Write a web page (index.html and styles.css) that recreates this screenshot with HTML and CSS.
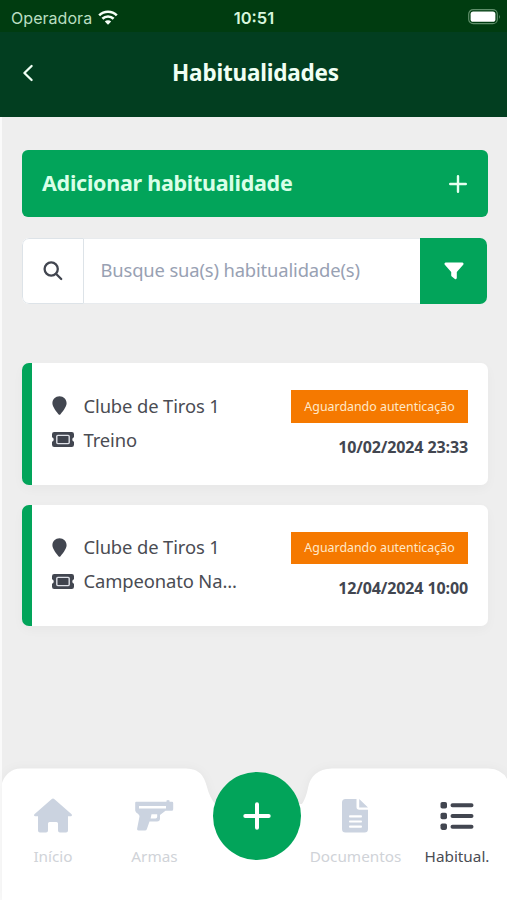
FILE: index.html
```html
<!DOCTYPE html>
<html lang="pt-BR">
<head>
    <meta charset="UTF-8">
    <meta name="viewport" content="width=device-width, initial-scale=1.0">
    <title>Habitualidades</title>

    <link rel="stylesheet" href="styles.css">
</head>
<body>

    <div class="status-bar">
        <div class="carrier">
            <span>Operadora</span>
            <svg width="20" height="15" viewBox="0 0 20 15" fill="none" stroke="#f4fff6" stroke-width="2.6">
                <path d="M1.2 5.4a12.6 12.6 0 0 1 17.6 0"/>
                <path d="M4.4 8.8a8 8 0 0 1 11.2 0"/>
                <path d="M10 14.8L6.8 11.6a4.6 4.6 0 0 1 6.4 0z" fill="#f4fff6" stroke="none"/>
            </svg>
        </div>
        <span class="clock">10:51</span>
        <svg class="battery" width="33" height="16" viewBox="0 0 33 16">
            <rect x=".7" y=".7" width="28.6" height="14" rx="4.5" fill="none" stroke="#5f8f6a" stroke-width="1.2"/>
            <rect x="2.6" y="2.6" width="24.8" height="10.2" rx="2.6" fill="#fff"/>
            <path d="M31 5.6q1.6 2.2 0 4.4z" fill="#5f8f6a"/>
        </svg>
    </div>

    <header class="header">
        <svg class="back" width="12" height="18" viewBox="0 0 12 18" fill="none" stroke="#f0fff4" stroke-width="2.3" stroke-linecap="round" stroke-linejoin="round">
            <path d="M9.6 2L2.4 9l7.2 7"/>
        </svg>
        <h1>Habitualidades</h1>
    </header>

    <main class="content">

        <div class="add-btn">
            <span>Adicionar habitualidade</span>
            <svg width="18" height="18" viewBox="0 0 18 18" stroke="#e6fff0" stroke-width="2.4" stroke-linecap="round">
                <path d="M9 1.2v15.600M1.200 9h15.600"/>
            </svg>
        </div>

        <div class="search">
            <div class="search-icon">
                <svg width="20" height="20" viewBox="0 0 20 20" fill="none" stroke="#424650" stroke-width="2.3" stroke-linecap="round">
                    <circle cx="8.2" cy="8" r="6.6"/>
                    <path d="M13.2 13l5 5"/>
                </svg>
            </div>
            <div class="search-text"><span>Busque sua(s) habitualidade(s)</span></div>
            <div class="filter">
                <svg width="20" height="18" viewBox="0 0 20 18" fill="#fff">
                    <path d="M1.6.6h16.8q1.8.5.8 2.1L12.800 10v6q-.3 1.700-1.900.900L7.800 14.500q-.6-.5-.6-1.300V10L.8 2.700Q-.2 1.100 1.600.600z"/>
                </svg>
            </div>
        </div>

        <div class="cards">
            <div class="card">
                <div class="info">
                    <div class="row">
                        <svg class="pin" width="15" height="19" viewBox="0 0 15 19"><path d="M7.500.300C11.500.300 14.600 3.300 14.600 7.200c0 3.700-4.500 9-6.300 11.200q-.8.8-1.600 0C4.900 16.200.400 10.900.400 7.200.400 3.300 3.500.300 7.500.300z"/></svg>
                        <span>Clube de Tiros 1</span>
                    </div>
                    <div class="row">
                        <svg class="ticket" width="22" height="15" viewBox="0 0 22 15"><path d="M2.200 0h17.600Q22 0 22 2.200v3a2.400 2.400 0 0 0 0 4.600v3q0 2.200-2.200 2.200H2.200Q0 15 0 12.800v-3a2.400 2.400 0 0 0 0-4.600V2.200Q0 0 2.200 0z"/><rect x="4.800" y="3.400" width="12.400" height="8.200" rx="1" fill="#3f434d" stroke="#dfe1e8" stroke-width="1.400"/></svg>
                        <span>Treino</span>
                    </div>
                </div>
                <div class="side">
                    <div class="badge"><span>Aguardando autenticação</span></div>
                    <div class="date">10/02/2024 23:33</div>
                </div>
            </div>

            <div class="card">
                <div class="info">
                    <div class="row">
                        <svg class="pin" width="15" height="19" viewBox="0 0 15 19"><path d="M7.500.300C11.500.300 14.600 3.300 14.600 7.200c0 3.700-4.500 9-6.300 11.200q-.8.8-1.600 0C4.900 16.200.400 10.900.400 7.200.400 3.300 3.500.300 7.500.300z"/></svg>
                        <span>Clube de Tiros 1</span>
                    </div>
                    <div class="row">
                        <svg class="ticket" width="22" height="15" viewBox="0 0 22 15"><path d="M2.200 0h17.600Q22 0 22 2.200v3a2.400 2.400 0 0 0 0 4.600v3q0 2.200-2.200 2.200H2.200Q0 15 0 12.800v-3a2.400 2.400 0 0 0 0-4.600V2.200Q0 0 2.200 0z"/><rect x="4.800" y="3.400" width="12.400" height="8.200" rx="1" fill="#3f434d" stroke="#dfe1e8" stroke-width="1.400"/></svg>
                        <span>Campeonato Na...</span>
                    </div>
                </div>
                <div class="side">
                    <div class="badge"><span>Aguardando autenticação</span></div>
                    <div class="date">12/04/2024 10:00</div>
                </div>
            </div>
        </div>

    </main>

    <nav class="tab-bar">
        <svg class="tab-shape" width="505" height="132" viewBox="0 0 505 132">
            <path d="M0 15Q5 1 19 .500H184C198 1 202 8 205 19Q207 28 213 36H300Q304 30 306 20C308 8 316 1 330 .500H486Q500 1 505 11V132H0z" fill="#fff"/>
        </svg>

        <div class="tab">
            <svg width="40" height="36" viewBox="0 0 40 36">
                <path d="M18.500 1.200q1.500-1.400 3 0L38.600 16.200q1 1.600-.8 2.100H35V32.500q0 2-2 2H27q-2 0-2-2V25.500q0-1.500-1.500-1.500h-7q-1.500 0-1.500 1.500v7q0 2-2 2H7q-2 0-2-2V18.300H2.200q-1.800-.5-.8-2.100z"/>
            </svg>
            <span class="label">Início</span>
        </div>

        <div class="tab">
            <svg width="40" height="36" viewBox="0 0 40 36">
                <path fill-rule="evenodd" d="M2.200 3.700H32.500V2.500q1.500-1.200 3 0v1.200H38q1.200 0 1.200 1.200v6.300q0 1.500-1.500 1.500H31.500L26 17v3.500q0 3-3 3H15.500L12.800 31.200q-.4 1.300-1.800 1.300H4.500q-1.800 0-1.400-1.800L5.500 18.500C5.500 15.500 2 15.800 1.200 12.500V4.700q0-1 1-1zM5 7.900v2.500H32V7.900zM17.500 16.200l-.9 4.200h4.900q1.700 0 1.700-1.700v-2.500z"/>
            </svg>
            <span class="label">Armas</span>
        </div>

        <div class="tab">
            <div class="plus">
                <svg width="30" height="30" viewBox="0 0 30 30" stroke="#fff" stroke-width="4" stroke-linecap="round">
                    <path d="M15 3.300v23.400M3.300 15h23.400"/>
                </svg>
            </div>
        </div>

        <div class="tab">
            <svg width="28" height="36" viewBox="0 0 28 36">
                <path fill-rule="evenodd" d="M4.500 1H15.500V9q0 2.700 2.700 2.700H27V31q0 3.500-3.500 3.500h-19Q1 34.500 1 31V4.500Q1 1 4.500 1zM8.500 17.300q-1.100 1.100 0 2.200h12q1.100-1.100 0-2.200zM8.500 22.400q-1.100 1.100 0 2.200h12q1.100-1.100 0-2.200zM8.500 27.500q-1.100 1.100 0 2.200h12q1.100-1.100 0-2.200zM18.200 1L27 9.500H18.200z"/>
            </svg>
            <span class="label">Documentos</span>
        </div>

        <div class="tab active">
            <svg width="34" height="36" viewBox="0 0 34 36">
                <rect x=".5" y="4" width="6.500" height="6.500" rx="1.800"/>
                <rect x=".5" y="14.700" width="6.500" height="6.500" rx="1.800"/>
                <rect x=".5" y="25.400" width="6.500" height="6.500" rx="1.800"/>
                <path d="M12.500 7.300h19M12.500 18h19M12.500 28.700h19" stroke="#424650" stroke-width="4" stroke-linecap="round"/>
            </svg>
            <span class="label">Habitual.</span>
        </div>
    </nav>

</body>
</html>
```
FILE: styles.css
```css
*{
    box-sizing: border-box;
}

body{
    margin: 0;
    width: 507px;
    height: 900px;
    overflow: hidden;
    display: flex;
    flex-direction: column;
    background-color: #eee;
    font-family: "Noto Sans", sans-serif;
}

svg{
    display: block;
    flex-shrink: 0;
}

.status-bar{
    height: 32px;
    padding: 3px 6px 0 11px;
    display: grid;
    grid-template-columns: 1fr auto 1fr;
    align-items: center;
    background-color: #003c10;
    color: #b9dfc1;
    font-family: Inter, sans-serif;
}

.carrier{
    display: flex;
    align-items: center;
    gap: 6px;
    font-size: 16px;
    letter-spacing: 0.05px;
}

.clock{
    padding-right: 4px;
    font-size: 16.5px;
    font-weight: 600;
    color: #d6f6dc;
}

.battery{
    justify-self: end;
    margin-bottom: 1px;
}

.header{
    height: 85px;
    padding: 0 22px;
    display: grid;
    grid-template-columns: 30px 1fr 26px;
    align-items: center;
    background-color: #023e20;
    border-bottom: 4px solid #023e20;
}

.header h1{
    margin: 0;
    text-align: center;
    font-size: 22.5px;
    line-height: 30px;
    font-weight: 700;
    letter-spacing: -0.2px;
    color: #f0fff4;
}

.content{
    flex: 1;
    padding: 33px 19px 0 20px;
    border-left: 2px solid #fafafa;
}

.add-btn{
    height: 67px;
    padding: 0 21px 0 20px;
    display: flex;
    align-items: center;
    justify-content: space-between;
    background-color: #02a45a;
    border-radius: 6px;
    color: #d9ffe8;
    font-size: 21.5px;
    font-weight: 700;
    letter-spacing: -0.27px;
}

.add-btn span{
    padding-bottom: 3px;
}

.search{
    margin: 21px 1px 0 0;
    height: 66px;
    display: flex;
    border-radius: 7px;
    overflow: hidden;
    background-color: #fff;
}

.search-icon{
    width: 62px;
    display: flex;
    align-items: center;
    justify-content: center;
    border: 1px solid #dde3e8;
    border-radius: 7px 0 0 7px;
}

.search-text{
    flex: 1;
    display: flex;
    align-items: center;
    padding: 0 0 3px 16.5px;
    border: 1px solid #e8ebee;
    border-width: 1px 0;
    color: #98a1b3;
    font-size: 18.4px;
    letter-spacing: -0.15px;
    white-space: nowrap;
}

.filter{
    width: 67px;
    display: flex;
    align-items: center;
    justify-content: center;
    background-color: #02a45a;
}

.cards{
    margin: 59px 0 0;
    display: flex;
    flex-direction: column;
    gap: 20px;
}

.card{
    height: 121.5px;
    padding: 26px 20px 0;
    display: flex;
    justify-content: space-between;
    background: linear-gradient(to right, #02a45a 10px, #fff 10px);
    border-radius: 7px;
    box-shadow: 0 4px 12px rgba(0, 0, 0, 0.03);
}

.info{
    padding-left: 9.5px;
}

.row{
    height: 34px;
    padding-bottom: 1px;
    display: grid;
    grid-template-columns: 32px auto;
    align-items: center;
    color: #4a4c53;
    font-size: 18.4px;
    letter-spacing: -0.12px;
    white-space: nowrap;
}

.row span{
    padding-bottom: 1px;
}

.pin, .ticket{
    fill: #424650;
}

.side{
    display: flex;
    flex-direction: column;
    align-items: flex-end;
}

.badge{
    width: 177px;
    height: 32.5px;
    margin-top: 1px;
    display: flex;
    align-items: center;
    justify-content: center;
    background-color: #f57900;
    color: #ffe8c8;
    font-size: 12.4px;
    white-space: nowrap;
}

.date{
    margin-top: 13px;
    font-family: "Open Sans", sans-serif;
    font-size: 16px;
    line-height: 22px;
    font-weight: 700;
    letter-spacing: -0.12px;
    color: #424650;
    white-space: nowrap;
}

.tab-bar{
    position: relative;
    height: 132px;
    border-left: 2px solid #fafafa;
    display: grid;
    grid-template-columns: 102px 101px 103px 95px 104px;
}

/* white shape behind the tabs, with the notch for the round button */
.tab-shape{
    position: absolute;
    top: 0;
    left: 0;
    filter: drop-shadow(0 0 5px rgba(0, 0, 0, 0.04));
}

.tab{
    position: relative;
    padding-top: 30px;
    display: flex;
    flex-direction: column;
    align-items: center;
    fill: #cbd3e0;
    color: #d0d3d8;
}

.tab > svg{
    margin-right: 1px;
}

.label{
    margin-top: 11px;
    font-size: 15.3px;
    line-height: 22px;
    white-space: nowrap;
}

.tab.active{
    padding-left: 4px;
    fill: #424650;
    color: #4a4c53;
}

.plus{
    width: 88px;
    height: 88px;
    margin-top: -26px;
    display: flex;
    align-items: center;
    justify-content: center;
    border-radius: 50%;
    background-color: #02a45a;
}
```
